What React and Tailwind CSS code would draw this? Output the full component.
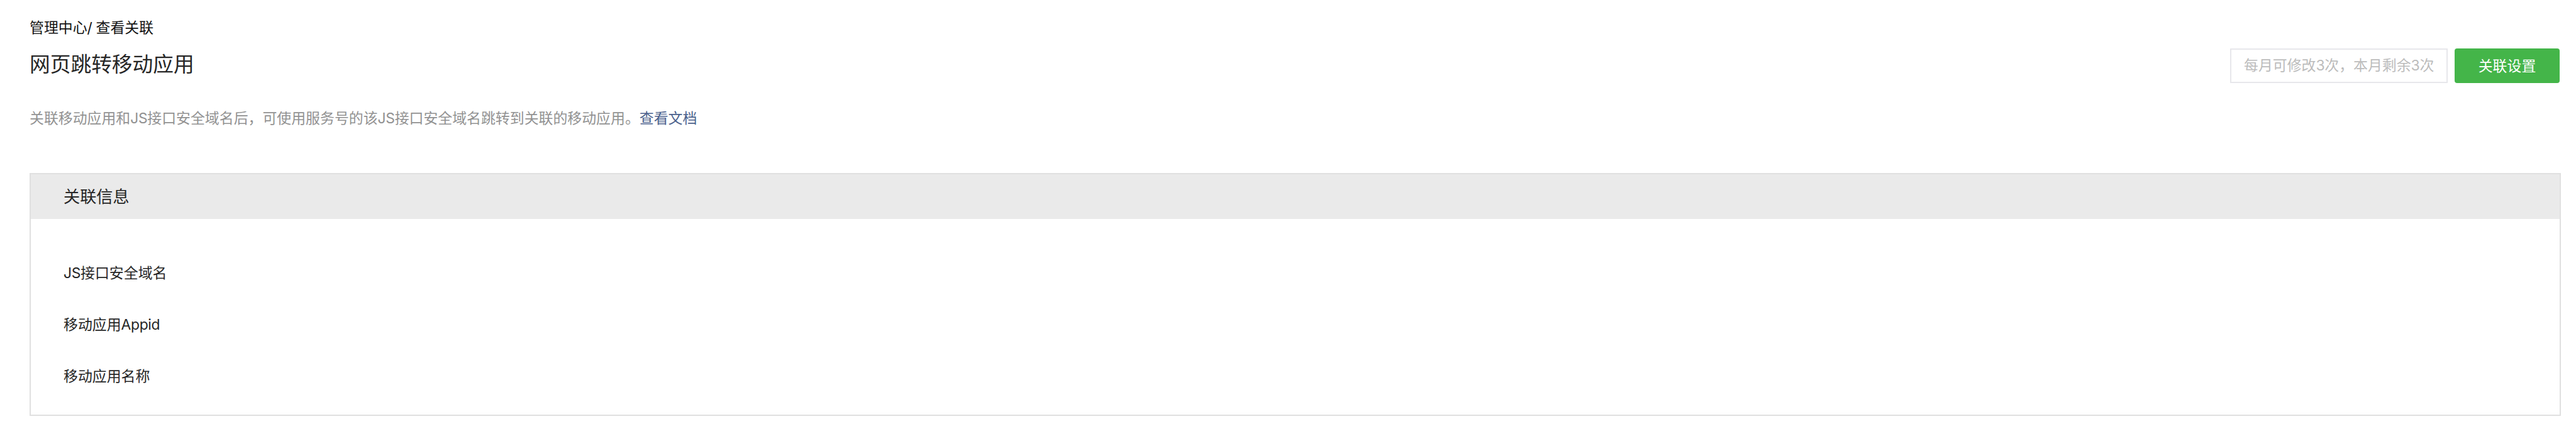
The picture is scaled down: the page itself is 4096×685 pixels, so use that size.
const fields = [
  [["JS", true], ["接口安全域名"]],
  [["移动应用"], ["Appid", true]],
  [["移动应用名称"]],
];

function Latin({ children }) {
  return <span className="tracking-[-0.015em]">{children}</span>;
}

function Header() {
  return (
    <header className="flex h-[275px] shrink-0 justify-between">
      <div className="flex flex-col">
        <nav className="mt-6 h-10 leading-10 text-[#111]">
          管理中心<Latin>/ </Latin>查看关联
        </nav>
        <h1 className="mt-2 h-[60px] text-[32.72px] leading-[60px] text-[#262626]">
          网页跳转移动应用
        </h1>
        <p className="mt-9 h-10 leading-10 text-[#929292]">
          关联移动应用和<Latin>JS</Latin>接口安全域名后，可使用服务号的该<Latin>JS</Latin>
          接口安全域名跳转到关联的移动应用。<a className="text-[#4a5f8c]">查看文档</a>
        </p>
      </div>
      <div className="mt-[77px] flex h-[55px] gap-[11px]">
        <div className="flex w-[346px] items-center border-2 border-[#e7e7eb] pl-[20px] text-[#bcbcbc]">
          <span>
            每月可修改<Latin>3</Latin>次，本月剩余<Latin>3</Latin>次
          </span>
        </div>
        <button className="w-[167px] rounded-[4px] bg-[#44b549] pt-px text-white">关联设置</button>
      </div>
    </header>
  );
}

export default function App() {
  return (
    <div className="flex h-[685px] w-[4096px] flex-col whitespace-nowrap bg-white pl-[47px] pr-[26px] font-['Inter','Noto_Sans_CJK_SC',sans-serif] text-[22.9px] text-[#262626]">
      <Header />
      <section className="mr-[-2px] h-[386px] border-2 border-[#e0e0e0]">
        <h2 className="h-[71px] bg-[#eaeaea] pl-[52px] text-[26.17px] leading-[71px]">关联信息</h2>
        <ul className="pl-[52px] pt-[45px]">
          {fields.map((parts, i) => (
            <li key={i} className="h-[81.8px] leading-[82px]">
              {parts.map(([text, latin]) => (latin ? <Latin key={text}>{text}</Latin> : text))}
            </li>
          ))}
        </ul>
      </section>
    </div>
  );
}
